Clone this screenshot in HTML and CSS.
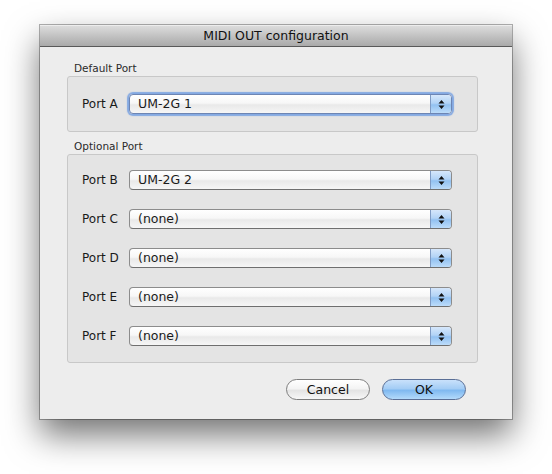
FILE: index.html
```html
<!DOCTYPE html>
<html>
<head>
<meta charset="utf-8">
<title>MIDI OUT configuration</title>
<link rel="stylesheet" href="styles.css">
</head>
<body>
<div class="window">
  <div class="titlebar">MIDI OUT configuration</div>
  <div class="content">
    <div class="group-label">Default Port</div>
    <div class="group group-default">
      <div class="row">
        <span class="port-label">Port A</span>
        <div class="popup focused"><span class="popup-text">UM-2G 1</span><span class="popup-arrows"><svg width="7" height="11" viewBox="0 0 7 11"><path d="M3.5 1 L6.5 4.5 L0.5 4.5 Z M0.5 6.5 L6.5 6.5 L3.5 10 Z" fill="#111"/></svg></span></div>
      </div>
    </div>
    <div class="group-label">Optional Port</div>
    <div class="group group-optional">
      <div class="row">
        <span class="port-label">Port B</span>
        <div class="popup"><span class="popup-text">UM-2G 2</span><span class="popup-arrows"><svg width="7" height="11" viewBox="0 0 7 11"><path d="M3.5 1 L6.5 4.5 L0.5 4.5 Z M0.5 6.5 L6.5 6.5 L3.5 10 Z" fill="#111"/></svg></span></div>
      </div>
      <div class="row">
        <span class="port-label">Port C</span>
        <div class="popup"><span class="popup-text">(none)</span><span class="popup-arrows"><svg width="7" height="11" viewBox="0 0 7 11"><path d="M3.5 1 L6.5 4.5 L0.5 4.5 Z M0.5 6.5 L6.5 6.5 L3.5 10 Z" fill="#111"/></svg></span></div>
      </div>
      <div class="row">
        <span class="port-label">Port D</span>
        <div class="popup"><span class="popup-text">(none)</span><span class="popup-arrows"><svg width="7" height="11" viewBox="0 0 7 11"><path d="M3.5 1 L6.5 4.5 L0.5 4.5 Z M0.5 6.5 L6.5 6.5 L3.5 10 Z" fill="#111"/></svg></span></div>
      </div>
      <div class="row">
        <span class="port-label">Port E</span>
        <div class="popup"><span class="popup-text">(none)</span><span class="popup-arrows"><svg width="7" height="11" viewBox="0 0 7 11"><path d="M3.5 1 L6.5 4.5 L0.5 4.5 Z M0.5 6.5 L6.5 6.5 L3.5 10 Z" fill="#111"/></svg></span></div>
      </div>
      <div class="row">
        <span class="port-label">Port F</span>
        <div class="popup"><span class="popup-text">(none)</span><span class="popup-arrows"><svg width="7" height="11" viewBox="0 0 7 11"><path d="M3.5 1 L6.5 4.5 L0.5 4.5 Z M0.5 6.5 L6.5 6.5 L3.5 10 Z" fill="#111"/></svg></span></div>
      </div>
    </div>
    <div class="buttons">
      <button class="btn">Cancel</button>
      <button class="btn btn-default">OK</button>
    </div>
  </div>
</div>
</body>
</html>
```
FILE: styles.css
```css
* { box-sizing: border-box; }
html, body {
  margin: 0;
  padding: 0;
  background: #ffffff;
}
body {
  min-height: 474px;
  padding: 25px 0 55px 40px;
  font-family: "DejaVu Sans", "Liberation Sans", sans-serif;
  color: #1a1a1a;
}
.window {
  width: 472px;
  height: 394px;
  background: #ededed;
  box-shadow: 0 0 0 1px rgba(0,0,0,0.3), 0 16px 32px rgba(0,0,0,0.55);
  display: flex;
  flex-direction: column;
}
.titlebar {
  height: 22px;
  border-bottom: 1px solid #595959;
  background: linear-gradient(#dcdcdc, #bdbdbd 60%, #aaaaaa);
  border-top: 1px solid #ededed;
  text-align: center;
  font-size: 12.5px;
  line-height: 20px;
  color: #111;
}
.content {
  padding: 15px 34px 0 27px;
  display: flex;
  flex-direction: column;
}
.group-label {
  font-size: 10.5px;
  line-height: 13px;
  padding-left: 7px;
  margin-bottom: 1px;
  color: #2a2a2a;
}
.group {
  background: #e4e4e4;
  border: 1px solid #c8c8c8;
  border-radius: 3px;
  padding: 0 25px 0 14px;
  display: flex;
  flex-direction: column;
  gap: 19px;
}
.group-default {
  padding-top: 17px;
  padding-bottom: 17px;
  margin-bottom: 8px;
}
.group-optional {
  padding-top: 15px;
  padding-bottom: 16px;
}
.row {
  display: flex;
  align-items: center;
  height: 20px;
}
.port-label {
  width: 47px;
  font-size: 12px;
}
.popup {
  flex: 1;
  height: 20px;
  display: flex;
  border: 1px solid #8c8c8c;
  border-bottom-color: #6f6f6f;
  border-radius: 4px;
  background: linear-gradient(#ffffff, #f7f7f7 45%, #e9e9e9 55%, #f6f6f6);
  overflow: hidden;
}
.popup.focused {
  box-shadow: 0 0 1px 2px rgba(100, 150, 225, 0.75);
  border-color: #6d85b3;
}
.popup-text {
  flex: 1;
  font-size: 12.5px;
  line-height: 18px;
  padding-left: 8px;
}
.popup-arrows {
  width: 21px;
  display: flex;
  align-items: center;
  justify-content: center;
  border-left: 1px solid #7f9bc4;
  background: linear-gradient(#d6e7fb, #b2d3f6 45%, #92c1f1 55%, #bcdcfa);
}
.buttons {
  margin-top: 16px;
  margin-right: 12px;
  display: flex;
  justify-content: flex-end;
  gap: 12px;
}
.btn {
  width: 84px;
  height: 21px;
  border-radius: 11px;
  border: 1px solid #7d7d7d;
  background: linear-gradient(#ffffff, #f4f4f4 45%, #e4e4e4 55%, #f7f7f7);
  font-family: "DejaVu Sans", "Liberation Sans", sans-serif;
  font-size: 12.5px;
  color: #111;
  padding: 0;
  line-height: 19px;
}
.btn-default {
  border-color: #5a6f96;
  background: linear-gradient(#c9e1fb, #a4cdf5 45%, #80b9f0 55%, #b3dafb);
}
```
